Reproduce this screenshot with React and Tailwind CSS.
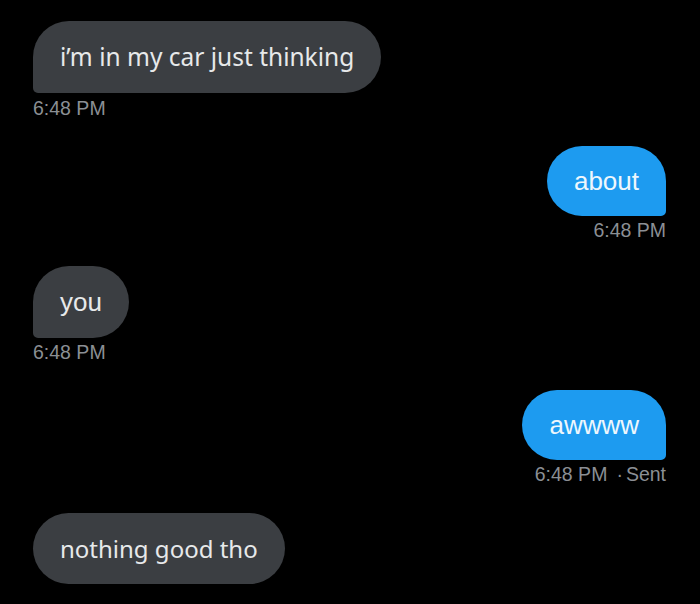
export default function App() {
  const ts = "text-[19.5px] leading-[22px] text-[#8b8f94] [font-family:'Liberation_Sans',Arial,sans-serif]";
  const recv = "h-[72px] flex items-center px-[27px] rounded-[36px] rounded-bl-[5px] bg-[#3b3e42] text-[#e7e9ea]";
  const sent = "h-[70px] flex items-center px-[27px] rounded-[35px] rounded-br-[5px] bg-[#1d9bf0] text-[#eef7fd] text-[26px] [font-family:'Liberation_Sans',Arial,sans-serif]";
  return (
    <div className="w-[700px] h-[604px] bg-black overflow-hidden flex flex-col pl-[33px] pr-[34px] pt-[21px]">
      <div className="flex flex-col items-start">
        <div className={recv + " text-[24.5px] [font-family:'Noto_Sans',sans-serif]"}>i’m in my car just thinking</div>
        <div className={ts + " mt-[4px]"}>6:48 PM</div>
      </div>
      <div className="flex flex-col items-end mt-[27px]">
        <div className={sent}>about</div>
        <div className={ts + " mt-[3px]"}>6:48 PM</div>
      </div>
      <div className="flex flex-col items-start mt-[25px]">
        <div className={recv + " text-[26px] [font-family:'Liberation_Sans',Arial,sans-serif]"}>you</div>
        <div className={ts + " mt-[3px]"}>6:48 PM</div>
      </div>
      <div className="flex flex-col items-end mt-[27px]">
        <div className={sent}>awwww</div>
        <div className={ts + " mt-[3px]"}>6:48 PM<span className="ml-[9px] mr-[3px]">·</span>Sent</div>
      </div>
      <div className="flex flex-col items-start mt-[28px]">
        <div className="h-[71px] flex items-center px-[27px] rounded-[36px] bg-[#3b3e42] text-[#e7e9ea] text-[24px] [font-family:'Noto_Sans',sans-serif]">nothing good tho</div>
      </div>
    </div>
  );
}
